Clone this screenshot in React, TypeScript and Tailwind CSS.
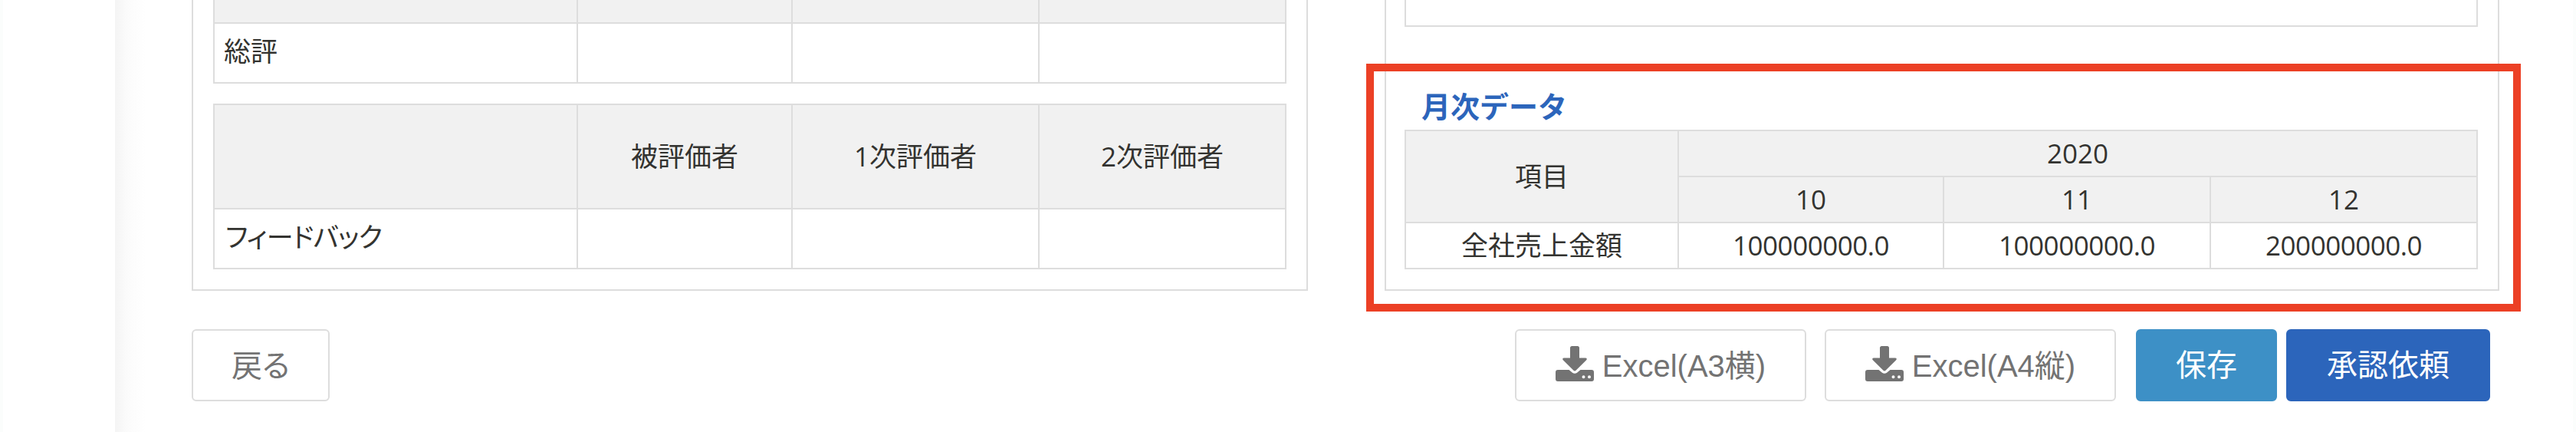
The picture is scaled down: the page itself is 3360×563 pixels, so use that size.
import type { ReactNode } from 'react'
import { clsx } from 'clsx'

type CellProps = {
  children?: ReactNode
  className?: string
  head?: boolean
  colSpan?: number
  rowSpan?: number
}

function Cell({ children, className, head, colSpan, rowSpan }: CellProps) {
  const Tag = head ? 'th' : 'td'
  return (
    <Tag
      colSpan={colSpan}
      rowSpan={rowSpan}
      className={clsx('border-2 border-[#ddd] p-0 font-normal', head && 'bg-[#f1f1f1]', className)}
    >
      {children}
    </Tag>
  )
}

function ReviewColumns() {
  return (
    <colgroup>
      <col className="w-[474px]" />
      <col className="w-[280px]" />
      <col className="w-[322px]" />
      <col className="w-[322px]" />
    </colgroup>
  )
}

function ReviewPanel() {
  return (
    <section className="w-[1456px] h-[379px] border-2 border-t-0 border-[#ddd] pl-[26px]">
      <table className="w-[1400px] -mt-[31px] table-fixed border-collapse">
        <ReviewColumns />
        <tbody>
          <tr className="h-[60px]">
            <Cell head />
            <Cell head />
            <Cell head />
            <Cell head />
          </tr>
          <tr className="h-[78px]">
            <Cell className="pl-3 text-left align-top">
              <div className="pt-[13px] leading-[46px]">総評</div>
            </Cell>
            <Cell />
            <Cell />
            <Cell />
          </tr>
        </tbody>
      </table>
      <table className="w-[1400px] mt-[26px] table-fixed border-collapse">
        <ReviewColumns />
        <tbody>
          <tr className="h-[136px]">
            <Cell head />
            <Cell head>被評価者</Cell>
            <Cell head>1次評価者</Cell>
            <Cell head>2次評価者</Cell>
          </tr>
          <tr className="h-[78px]">
            <Cell className="pl-3.5 text-left align-top">
              <div className="pt-[13px] leading-[46px] tracking-[-0.8px] [font-feature-settings:'palt']">フィードバック</div>
            </Cell>
            <Cell />
            <Cell />
            <Cell />
          </tr>
        </tbody>
      </table>
    </section>
  )
}

function MonthlyPanel() {
  return (
    <section className="relative w-[1454px] h-[379px] border-2 border-t-0 border-[#ddd] pl-6">
      <div className="w-[1400px] h-[35px] border-2 border-t-0 border-[#ddd]" />
      <h2 className="mt-[81px] h-[53px] pl-[22px] text-[38px] leading-[44px] font-bold text-[#2c65bb]">月次データ</h2>
      <table className="w-[1400px] table-fixed border-collapse text-center">
        <colgroup>
          <col className="w-[356px]" />
          <col className="w-[346px]" />
          <col className="w-[348px]" />
          <col className="w-[348px]" />
        </colgroup>
        <tbody>
          <tr className="h-[60px]">
            <Cell head rowSpan={2}>項目</Cell>
            <Cell head colSpan={3}>2020</Cell>
          </tr>
          <tr className="h-[60px]">
            <Cell head>10</Cell>
            <Cell head>11</Cell>
            <Cell head>12</Cell>
          </tr>
          <tr className="h-[60px]">
            <Cell>全社売上金額</Cell>
            <Cell className="tracking-[-0.5px]">100000000.0</Cell>
            <Cell className="tracking-[-0.5px]">100000000.0</Cell>
            <Cell className="tracking-[-0.5px]">200000000.0</Cell>
          </tr>
        </tbody>
      </table>
      {/* highlight frame */}
      <div className="absolute -left-[26px] top-[83px] w-[1506px] h-[323px] border-10 border-[#ec4025]" />
    </section>
  )
}

function DownloadIcon() {
  return (
    <svg viewBox="0 0 50 46" className="mb-1 w-[50px] h-[46px] shrink-0" fill="currentColor">
      <path d="M21.500 0h7q2.500 0 2.500 2.500V15.500h8c1.900 0 2.300 1.500 1.200 2.800L26.500 31.800q-1.500 1.300-3 0L9.800 18.300C8.700 17 9.100 15.500 11 15.500h8V2.500Q19 0 21.500 0z" />
      <path d="M3 31h14.500l4.500 3.700q3 2.200 6 0L32.500 31H47q3 0 3 3v9q0 3-3 3H3q-3 0-3-3v-9q0-3 3-3zM36.500 38.200a2 2 0 1 0 0 4 2 2 0 0 0 0-4zM44 38.200a2 2 0 1 0 0 4 2 2 0 0 0 0-4z" fillRule="evenodd" />
    </svg>
  )
}

function Button({ children, className }: { children: ReactNode; className: string }) {
  return (
    <button className={clsx('flex h-[94px] items-center justify-center rounded-md border-2 text-[40px] leading-none', className)}>
      {children}
    </button>
  )
}

const plain = 'border-[#ddd] bg-white text-[#737373]'

export default function App() {
  return (
    <div className="flex h-[563px] w-[3360px] overflow-hidden border-r-4 border-[#fbfdfc] bg-white font-['Liberation_Sans','Noto_Sans_CJK_JP',sans-serif] text-[#333330]">
      <aside className="w-[150px] shrink-0 border-l-4 border-[#fbfdfc]" />
      <div className="w-[100px] shrink-0 bg-linear-to-r from-[#f4f4f4] via-[#fbfbfb] via-15% to-white to-40%" />
      <main className="w-[3010px] shrink-0 font-['Open_Sans','Noto_Sans_CJK_JP',sans-serif] text-[35px] leading-[50px]">
        <div className="flex justify-between">
          <ReviewPanel />
          <MonthlyPanel />
        </div>
        <div className="mt-[50px] flex items-center pr-3 font-['Liberation_Sans','Noto_Sans_CJK_JP',sans-serif]">
          <Button className={clsx(plain, 'w-[180px]')}>
            <span className="pt-0.5 [font-feature-settings:'palt']">戻る</span>
          </Button>
          <Button className={clsx(plain, 'ml-auto w-[380px] gap-[11px]')}>
            <DownloadIcon />
            <span className="pt-0.5">Excel(A3横)</span>
          </Button>
          <Button className={clsx(plain, 'ml-6 w-[380px] gap-[11px]')}>
            <DownloadIcon />
            <span className="pt-0.5">Excel(A4縦)</span>
          </Button>
          <Button className="ml-[26px] w-[184px] border-[#3d90c6] bg-[#3d90c6] text-white">保存</Button>
          <Button className="ml-3 w-[266px] border-[#2c65bb] bg-[#2c65bb] text-white">承認依頼</Button>
        </div>
      </main>
    </div>
  )
}
